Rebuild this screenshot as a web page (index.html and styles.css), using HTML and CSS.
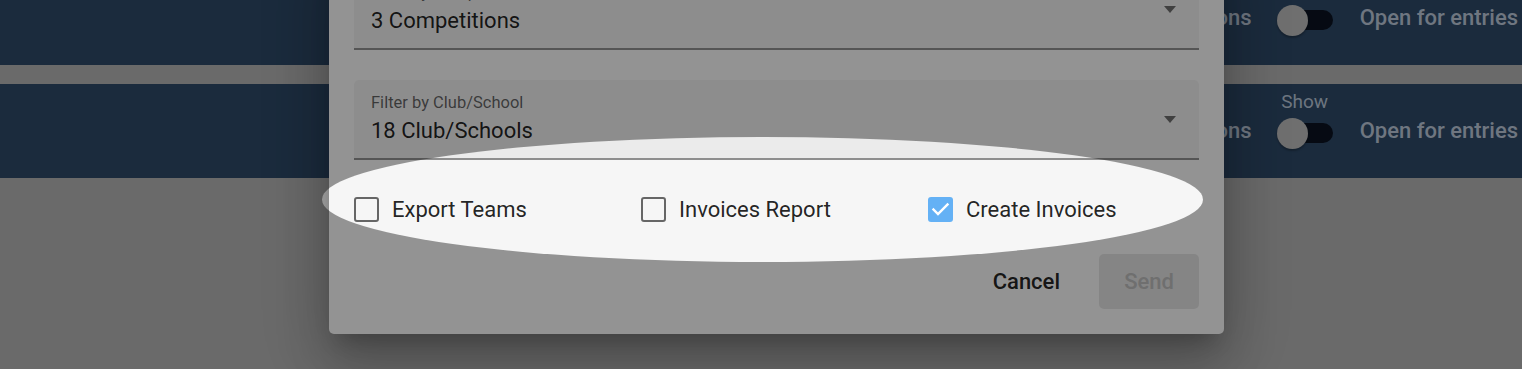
FILE: index.html
```html
<!DOCTYPE html>
<html lang="en">
<head>
<meta charset="utf-8">
<title>Send Invoices</title>
<link rel="stylesheet" href="styles.css">
</head>
<body>
  <div class="page">
    <div class="bar">
      <div class="bar-row">
        <span class="bar-text">Show Competitions</span>
        <div class="switch-wrap">
          <div class="switch"><span class="thumb"></span><span class="track"></span></div>
        </div>
        <span class="bar-text">Open for entries</span>
      </div>
    </div>
    <div class="bar">
      <div class="bar-row">
        <span class="bar-text">Show Competitions</span>
        <div class="switch-wrap">
          <span class="switch-label">Show</span>
          <div class="switch"><span class="thumb"></span><span class="track"></span></div>
        </div>
        <span class="bar-text">Open for entries</span>
      </div>
    </div>
  </div>

  <div class="dialog">
    <div class="field">
      <div class="field-text">
        <span class="field-label">Filter by Competition</span>
        <span class="field-value">3 Competitions</span>
      </div>
      <span class="arrow"></span>
    </div>
    <div class="field field-next">
      <div class="field-text">
        <span class="field-label">Filter by Club/School</span>
        <span class="field-value">18 Club/Schools</span>
      </div>
      <span class="arrow"></span>
    </div>
    <div class="checks">
      <label class="check"><span class="box"></span><span>Export Teams</span></label>
      <label class="check"><span class="box"></span><span>Invoices Report</span></label>
      <label class="check"><span class="box checked"><svg width="25" height="25" viewBox="0 0 25 25"><polyline points="5.5,12.5 10,17 19.5,7.5" fill="none" stroke="#ffffff" stroke-width="2.4" stroke-linecap="square"/></svg></span><span>Create Invoices</span></label>
    </div>
    <div class="actions">
      <span class="btn btn-text">Cancel</span>
      <span class="btn btn-send">Send</span>
    </div>
  </div>

  <div class="spotlight"></div>
</body>
</html>
```

FILE: styles.css
```css
html, body {
  margin: 0;
  padding: 0;
}

body {
  width: 1522px;
  height: 369px;
  overflow: hidden;
  position: relative;
  background: #b1b1b1;
  font-family: Roboto, "Liberation Sans", sans-serif;
}

.page {
  display: flex;
  flex-direction: column;
  gap: 19px;
  margin-top: -29px;
}

.bar {
  height: 94px;
  background: #2d4866;
  display: flex;
  align-items: center;
  justify-content: flex-end;
  padding-right: 4px;
}

.bar-row {
  display: flex;
  align-items: center;
}

.bar-text {
  font-size: 22px;
  font-weight: 500;
  line-height: 26px;
  color: #b9c5d6;
  white-space: nowrap;
}

.switch-wrap {
  display: flex;
  flex-direction: column;
  align-items: center;
  margin: 4px 27px 0 25px;
}

.switch-label {
  font-size: 19px;
  line-height: 24px;
  height: 24px;
  margin-top: -26px;
  margin-bottom: 2px;
  color: #b6c3d5;
}

.switch {
  display: flex;
  align-items: center;
  height: 34px;
}

.thumb {
  position: relative;
  z-index: 1;
  width: 31px;
  height: 31px;
  border-radius: 50%;
  background: #b9b9b9;
  box-shadow: 0 2px 2px rgba(0, 0, 0, 0.25);
}

.track {
  width: 47px;
  height: 20px;
  margin-left: -22px;
  border-radius: 10px;
  background: #0a1220;
}

.dialog {
  position: absolute;
  z-index: 5;
  left: 329px;
  top: -55px;
  width: 895px;
  box-sizing: border-box;
  padding: 25px;
  background: #f6f6f6;
  border-radius: 5px;
  box-shadow: 0 15px 21px -10px rgba(0, 0, 0, 0.22),
              0 33px 52px 4px rgba(0, 0, 0, 0.16),
              0 12px 63px 11px rgba(0, 0, 0, 0.14);
}

.field {
  height: 80px;
  box-sizing: border-box;
  background: #ebebeb;
  border-radius: 5px 5px 0 0;
  border-bottom: 2px solid #8e8e8e;
  display: flex;
  align-items: center;
  padding: 0 23px 0 17px;
}

.field-next {
  margin-top: 30px;
}

.field-text {
  align-self: stretch;
  flex: 1;
  display: flex;
  flex-direction: column;
  padding-top: 13px;
}

.field-label {
  font-size: 16.5px;
  line-height: 20px;
  color: rgba(0, 0, 0, 0.6);
}

.field-value {
  font-size: 22px;
  line-height: 26px;
  margin-top: 5px;
  color: rgba(0, 0, 0, 0.87);
}

.arrow {
  width: 0;
  height: 0;
  border-left: 6.5px solid transparent;
  border-right: 6.5px solid transparent;
  border-top: 7px solid rgba(0, 0, 0, 0.54);
}

.checks {
  display: grid;
  grid-template-columns: 287px 287px 1fr;
  align-items: center;
  height: 58px;
  margin-top: 20px;
}

.check {
  display: flex;
  align-items: center;
  gap: 13px;
  font-size: 22px;
  line-height: 26px;
  padding-top: 1px;
  color: rgba(0, 0, 0, 0.87);
}

.box {
  width: 25px;
  height: 25px;
  box-sizing: border-box;
  border: 2.5px solid #666666;
  border-radius: 3px;
  display: flex;
  align-items: center;
  justify-content: center;
}

.box.checked {
  border: none;
  background: #64b1f5;
}

.actions {
  display: flex;
  justify-content: flex-end;
  align-items: center;
  gap: 28px;
  margin-top: 16px;
}

.btn {
  height: 55px;
  display: flex;
  align-items: center;
  justify-content: center;
  font-size: 22px;
  font-weight: 500;
  border-radius: 5px;
}

.btn-text {
  padding: 0 11px;
  color: rgba(0, 0, 0, 0.87);
}

.btn-send {
  width: 100px;
  background: #dedede;
  color: #b9b9b9;
}

.spotlight {
  position: absolute;
  z-index: 20;
  left: 322px;
  top: 137px;
  width: 881px;
  height: 125px;
  border-radius: 50%;
  box-shadow: 0 0 0 3000px rgba(0, 0, 0, 0.4);
  pointer-events: none;
}
```
